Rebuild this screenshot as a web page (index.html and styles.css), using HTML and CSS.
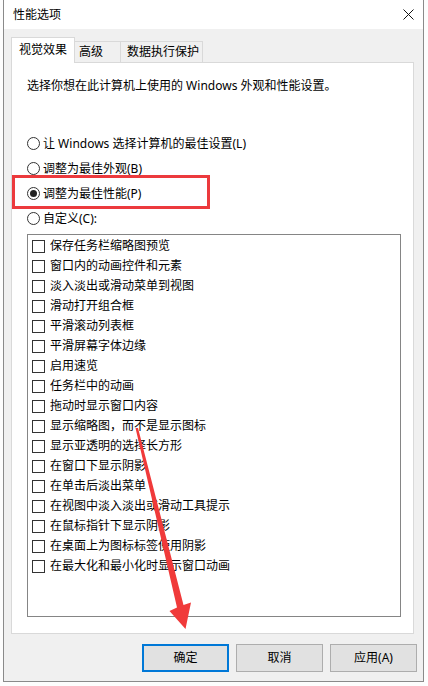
FILE: index.html
```html
<!DOCTYPE html>
<html lang="zh-CN">
<head>
<meta charset="utf-8">
<title>性能选项</title>
<link rel="stylesheet" href="styles.css">
</head>
<body>
<div class="window">
  <div class="titlebar">
    <span class="title">性能选项</span>
    <svg class="close" width="11" height="11" viewBox="0 0 11 11"><path d="M0.5 0.5 L10.5 10.5 M10.5 0.5 L0.5 10.5" stroke="#111" stroke-width="1" fill="none"/></svg>
  </div>
  <div class="content">
    <div class="tabs">
      <div class="tab tab-active">视觉效果</div>
      <div class="tab tab-adv">高级</div>
      <div class="tab tab-dep">数据执行保护</div>
    </div>
    <div class="panel">
      <div class="desc">选择你想在此计算机上使用的 Windows 外观和性能设置。</div>
      <div class="radios">
        <div class="radio-row"><span class="radio"></span><span>让 Windows 选择计算机的最佳设置(L)</span></div>
        <div class="radio-row"><span class="radio"></span><span>调整为最佳外观(B)</span></div>
        <div class="radio-row"><span class="radio radio-on"></span><span>调整为最佳性能(P)</span></div>
        <div class="radio-row"><span class="radio"></span><span>自定义(C):</span></div>
      </div>
      <div class="listbox">
        <div class="check-row"><span class="check"></span><span>保存任务栏缩略图预览</span></div>
        <div class="check-row"><span class="check"></span><span>窗口内的动画控件和元素</span></div>
        <div class="check-row"><span class="check"></span><span>淡入淡出或滑动菜单到视图</span></div>
        <div class="check-row"><span class="check"></span><span>滑动打开组合框</span></div>
        <div class="check-row"><span class="check"></span><span>平滑滚动列表框</span></div>
        <div class="check-row"><span class="check"></span><span>平滑屏幕字体边缘</span></div>
        <div class="check-row"><span class="check"></span><span>启用速览</span></div>
        <div class="check-row"><span class="check"></span><span>任务栏中的动画</span></div>
        <div class="check-row"><span class="check"></span><span>拖动时显示窗口内容</span></div>
        <div class="check-row"><span class="check"></span><span>显示缩略图，而不是显示图标</span></div>
        <div class="check-row"><span class="check"></span><span>显示亚透明的选择长方形</span></div>
        <div class="check-row"><span class="check"></span><span>在窗口下显示阴影</span></div>
        <div class="check-row"><span class="check"></span><span>在单击后淡出菜单</span></div>
        <div class="check-row"><span class="check"></span><span>在视图中淡入淡出或滑动工具提示</span></div>
        <div class="check-row"><span class="check"></span><span>在鼠标指针下显示阴影</span></div>
        <div class="check-row"><span class="check"></span><span>在桌面上为图标标签使用阴影</span></div>
        <div class="check-row"><span class="check"></span><span>在最大化和最小化时显示窗口动画</span></div>
      </div>
    </div>
    <div class="buttons">
      <div class="btn btn-default">确定</div>
      <div class="btn">取消</div>
      <div class="btn">应用(A)</div>
    </div>
  </div>
</div>
<div class="highlight"></div>
<svg class="arrow" width="428" height="686" viewBox="0 0 428 686">
  <polygon points="135.5,428 138,428 183.5,605 191,602.5 185.5,629 169.5,611 177,607.5" fill="#f03a3a"/>
</svg>
</body>
</html>
```

FILE: styles.css
```css
* { box-sizing: border-box; }
html, body { margin: 0; padding: 0; }
body {
  width: 428px;
  height: 686px;
  overflow: hidden;
  position: relative;
  background: #fdfdfd;
  font-family: "Noto Sans", "Noto Sans CJK SC", sans-serif;
  font-size: 12px;
  color: #000;
}
.window {
  margin-left: 3px;
  width: 421px;
  height: 682px;
  background: #f0f0f0;
  border: 1px solid #8a8a8a;
  border-top: none;
}
.titlebar {
  height: 29px;
  background: #fff;
  display: flex;
  align-items: center;
  justify-content: space-between;
  padding-left: 9px;
  padding-right: 9px;
}
.title { line-height: 16px; }
.close { display: block; margin-top: -1px; }
.content {
  padding-top: 8px;
  padding-left: 7px;
}
.tabs {
  display: flex;
  align-items: flex-end;
  height: 25px;
}
.tab {
  height: 21px;
  line-height: 19px;
  background: #f0f0f0;
  border-top: 1px solid #d9d9d9;
  border-right: 1px solid #d9d9d9;
}
.tab-active {
  width: 64px;
  height: 26px;
  margin-bottom: -1px;
  background: #fff;
  border-left: 1px solid #d9d9d9;
  padding-left: 7px;
  line-height: 24px;
  position: relative;
  z-index: 1;
}
.tab-adv { width: 46px; padding-left: 4px; }
.tab-dep { width: 82px; padding-left: 6px; }
.panel {
  width: 403px;
  height: 572px;
  background: #fff;
  border: 1px solid #d9d9d9;
  padding: 15px 0 0 15px;
}
.desc { line-height: 16px; }
.radios { margin-top: 37px; }
.radio-row {
  height: 25px;
  display: flex;
  align-items: center;
  line-height: 16px;
}
.radio {
  width: 13px;
  height: 13px;
  border: 1px solid #333;
  border-radius: 50%;
  background: #fff;
  margin-right: 3px;
  display: flex;
  align-items: center;
  justify-content: center;
  flex: none;
}
.radio-on::after {
  content: "";
  width: 7px;
  height: 7px;
  border-radius: 50%;
  background: #222;
}
.listbox {
  margin-top: 3px;
  width: 374px;
  height: 383px;
  border: 1px solid #858585;
  padding: 1px 0 0 4px;
}
.check-row {
  height: 20px;
  display: flex;
  align-items: center;
  line-height: 16px;
}
.check {
  width: 13px;
  height: 13px;
  border: 1px solid #333;
  background: #fff;
  margin-right: 5px;
  flex: none;
}
.buttons {
  margin-top: 10px;
  display: flex;
  justify-content: flex-end;
  gap: 7px;
  padding-right: 6px;
}
.btn {
  width: 87px;
  height: 28px;
  background: #e1e1e1;
  border: 1px solid #adadad;
  display: flex;
  align-items: center;
  justify-content: center;
  line-height: 16px;
}
.btn-default { border: 2px solid #0078d7; }
.highlight {
  position: absolute;
  left: 12px;
  top: 175px;
  width: 198px;
  height: 34px;
  border: 3px solid #ec3a3d;
}
.arrow {
  position: absolute;
  left: 0;
  top: 0;
  pointer-events: none;
}
```
